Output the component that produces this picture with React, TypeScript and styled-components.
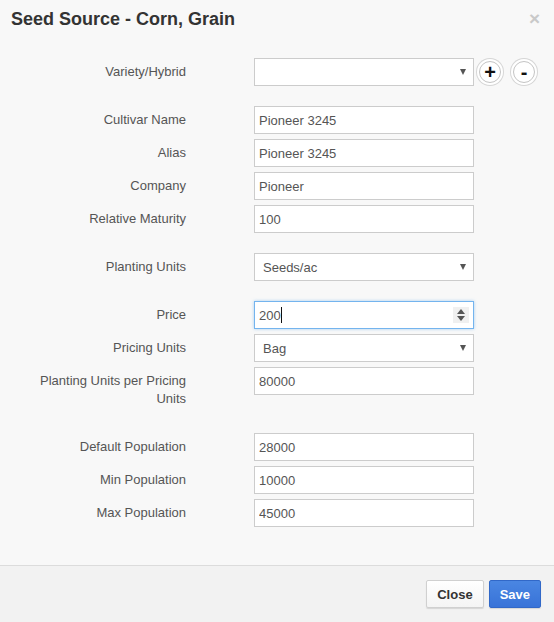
import { FunctionComponent, ReactNode } from 'react';
import styled, { createGlobalStyle } from 'styled-components';

const GlobalStyle = createGlobalStyle`
  html, body {
    margin: 0;
    padding: 0;
    background: #f8f8f8;
  }
  body {
    font-family: 'Liberation Sans', Arial, sans-serif;
    font-size: 13px;
    color: #555;
  }
`;

const Row: FunctionComponent<{ label: string; children: ReactNode }> = ({
  label,
  children,
}) => (
  <FormRow>
    <Label>{label}</Label>
    <Control>{children}</Control>
  </FormRow>
);

const Select: FunctionComponent<{ value?: string }> = ({ value }) => (
  <SelectBox>
    <span>{value}</span>
    <Caret />
  </SelectBox>
);

export default function App() {
  return (
    <Modal>
      <GlobalStyle />
      <Header>
        <Title>Seed Source - Corn, Grain</Title>
        <CloseX>×</CloseX>
      </Header>
      <Body>
        <Group>
          <Row label="Variety/Hybrid">
            <Select />
            <RoundButton>+</RoundButton>
            <RoundButton>-</RoundButton>
          </Row>
        </Group>
        <Group>
          <Row label="Cultivar Name">
            <Input defaultValue="Pioneer 3245" />
          </Row>
          <Row label="Alias">
            <Input defaultValue="Pioneer 3245" />
          </Row>
          <Row label="Company">
            <Input defaultValue="Pioneer" />
          </Row>
          <Row label="Relative Maturity">
            <Input defaultValue="100" />
          </Row>
        </Group>
        <Group>
          <Row label="Planting Units">
            <Select value="Seeds/ac" />
          </Row>
        </Group>
        <Group $space={25}>
          <Row label="Price">
            <FocusedBox>
              <span>200</span>
              <TextCaret />
              <Spinner>
                <SpinArrow $up />
                <SpinArrow />
              </Spinner>
            </FocusedBox>
          </Row>
          <Row label="Pricing Units">
            <Select value="Bag" />
          </Row>
          <Row label="Planting Units per Pricing Units">
            <Input defaultValue="80000" />
          </Row>
        </Group>
        <Group $space={0}>
          <Row label="Default Population">
            <Input defaultValue="28000" />
          </Row>
          <Row label="Min Population">
            <Input defaultValue="10000" />
          </Row>
          <Row label="Max Population">
            <Input defaultValue="45000" />
          </Row>
        </Group>
      </Body>
      <Footer>
        <Button>Close</Button>
        <Button $primary>Save</Button>
      </Footer>
    </Modal>
  );
}

const Modal = styled.div`
  width: 554px;
  height: 622px;
  display: flex;
  flex-direction: column;
  background: #f8f8f8;
`;

const Header = styled.div`
  display: flex;
  justify-content: space-between;
  align-items: flex-start;
  padding: 9px 14px 0 11px;
`;

const Title = styled.h4`
  margin: 0;
  font-size: 18px;
  line-height: 20px;
  font-weight: bold;
  color: #333;
`;

const CloseX = styled.span`
  font-size: 19px;
  line-height: 18px;
  font-weight: bold;
  color: #c9c9c9;
  margin-top: 1px;
`;

const Body = styled.div`
  flex: 1;
  padding-top: 29px;
`;

const Group = styled.div<{ $space?: number }>`
  display: flex;
  flex-direction: column;
  gap: 5px;
  margin-bottom: ${(p) => (p.$space ?? 20)}px;
`;

const FormRow = styled.div`
  display: flex;
  align-items: flex-start;
`;

const Label = styled.label`
  box-sizing: border-box;
  width: 186px;
  padding: 5px 0 0 26px;
  line-height: 18px;
  text-align: right;
  color: #555;
`;

const Control = styled.div`
  display: flex;
  align-items: center;
  margin-left: 68px;
`;

const fieldBase = `
  box-sizing: border-box;
  width: 220px;
  height: 28px;
  border: 1px solid #ccc;
  background: #fff;
  font-family: 'Liberation Sans', Arial, sans-serif;
  font-size: 13px;
  color: #555;
`;

const Input = styled.input`
  ${fieldBase}
  padding: 0 4px;
  outline: none;
  border-radius: 0;
`;

const SelectBox = styled.div`
  ${fieldBase}
  display: flex;
  align-items: center;
  justify-content: space-between;
  padding: 0 7px 0 8px;
`;

const Caret = styled.span`
  width: 0;
  height: 0;
  border-left: 3px solid transparent;
  border-right: 3px solid transparent;
  border-top: 6px solid #555;
`;

const FocusedBox = styled.div`
  ${fieldBase}
  position: relative;
  display: flex;
  align-items: center;
  padding: 0 4px;
  border-color: #74b4ee;
  box-shadow: 0 0 3px rgba(102, 175, 233, 0.55);
`;

const TextCaret = styled.span`
  width: 1px;
  height: 16px;
  background: #111;
`;

const Spinner = styled.span`
  position: absolute;
  right: 4px;
  top: 5px;
  width: 16px;
  height: 16px;
  background: #f0f0f0;
  display: flex;
  flex-direction: column;
  align-items: center;
  justify-content: center;
  gap: 2px;
`;

const SpinArrow = styled.span<{ $up?: boolean }>`
  width: 0;
  height: 0;
  border-left: 4px solid transparent;
  border-right: 4px solid transparent;
  ${(p) =>
    p.$up ? 'border-bottom: 5px solid #555;' : 'border-top: 5px solid #555;'}
`;

const RoundButton = styled.button`
  box-sizing: border-box;
  width: 22px;
  height: 22px;
  margin-left: 12px;
  padding: 0;
  border-radius: 50%;
  border: 1px solid #c4c4c4;
  background: #fff;
  box-shadow: 0 0 0 2px #fff, 0 0 0 3px #d6d6d6;
  font-family: 'Liberation Sans', Arial, sans-serif;
  font-size: 20px;
  font-weight: bold;
  line-height: 18px;
  color: #111;
  display: flex;
  align-items: center;
  justify-content: center;

  &:first-of-type {
    margin-left: 5px;
  }
`;

const Footer = styled.div`
  display: flex;
  justify-content: flex-end;
  gap: 5px;
  padding: 14px 13px 14px;
  background: #f2f2f2;
  border-top: 1px solid #dcdcdc;
`;

const Button = styled.button<{ $primary?: boolean }>`
  height: 28px;
  padding: 0 10px;
  border-radius: 2px;
  font-family: 'Liberation Sans', Arial, sans-serif;
  font-size: 13px;
  font-weight: bold;
  border: 1px solid ${(p) => (p.$primary ? '#3168c8' : '#d0d0d0')};
  background: ${(p) =>
    p.$primary
      ? 'linear-gradient(#4a86e2, #3873d8)'
      : 'linear-gradient(#ffffff, #f4f4f4)'};
  color: ${(p) => (p.$primary ? '#fff' : '#333')};
  box-shadow: 0 1px 1px rgba(0, 0, 0, 0.12);
`;
